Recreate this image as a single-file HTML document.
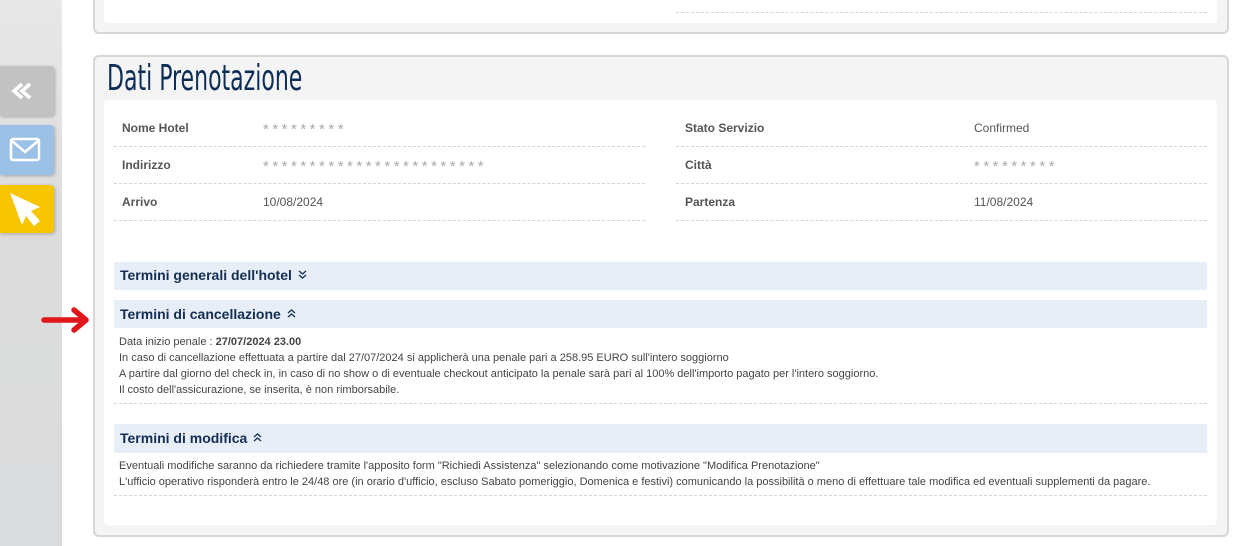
<!DOCTYPE html>
<html><head><meta charset="utf-8"><style>
*{margin:0;padding:0;box-sizing:border-box}
body{width:1252px;height:546px;overflow:hidden;background:#fff;font-family:"Liberation Sans",Arial,sans-serif;position:relative}
.a{position:absolute}
.side{left:0;top:0;width:62px;height:546px;background:linear-gradient(#e8e8e8,#dcdcdc 40%,#dadbdc)}
.btn{left:0;width:54px;border-radius:0 4px 4px 0;box-shadow:1px 1px 3px rgba(0,0,0,.25)}
.card{border:2px solid #d6d6d6;border-radius:6px;background:#f4f4f4}
.in{background:#fff;border-radius:4px}
.lb{font-size:12px;font-weight:bold;color:#555}
.vl{font-size:12px;color:#555}
.st{font-size:15px;color:#aaa;letter-spacing:3.5px;line-height:14px}
.dl{height:0;border-top:1px dashed #d4d4d4}
.hd{left:114px;width:1093px;background:#e7eef7;font-size:14px;font-weight:bold;color:#132e52;padding-left:6px;line-height:28px}
.hd svg{vertical-align:1px;margin-left:2px}
.tx{left:119px;font-size:11px;color:#444;line-height:16px}
</style></head><body>
<div class="a side"></div>
<div class="a btn" style="top:66px;height:50px;background:#c2c2c2"><svg width="54" height="50"><path d="M22 18 L14 25 L22 32 M30 18 L22 25 L30 32" stroke="#fff" stroke-width="3.5" fill="none"/></svg></div>
<div class="a btn" style="top:125px;height:50px;background:#9cc1e6"><svg width="54" height="50"><rect x="11" y="14" width="28" height="21" rx="2" stroke="#fff" stroke-width="2.5" fill="none"/><path d="M12 16 L25 27 L38 16" stroke="#fff" stroke-width="2.5" fill="none"/></svg></div>
<div class="a btn" style="top:185px;height:48px;background:#f7c600"><svg width="54" height="48"><path d="M10 8 L40 22 L31 26 L40 36 L34 41 L26 31 L22 40 Z" fill="#fff"/></svg></div>

<div class="a card" style="left:93px;top:-10px;width:1136px;height:44px"></div>
<div class="a in" style="left:104px;top:-5px;width:1113px;height:28px"></div>
<div class="a dl" style="left:676px;top:12px;width:531px"></div>

<div class="a card" style="left:93px;top:55px;width:1136px;height:482px"></div>
<div class="a" style="left:107px;top:58px;font-family:'Liberation Sans Narrow','DejaVu Sans Condensed',sans-serif;font-size:36px;color:#0d2d57;transform:scaleX(.68);transform-origin:left;white-space:nowrap">Dati Prenotazione</div>
<div class="a in" style="left:104px;top:100px;width:1113px;height:425px"></div>

<div class="a lb" style="left:122px;top:121px">Nome Hotel</div>
<div class="a st" style="left:263px;top:123px">*********</div>
<div class="a dl" style="left:114px;top:146px;width:531px"></div>
<div class="a lb" style="left:122px;top:158px">Indirizzo</div>
<div class="a st" style="left:263px;top:160px">************************</div>
<div class="a dl" style="left:114px;top:183px;width:531px"></div>
<div class="a lb" style="left:122px;top:195px">Arrivo</div>
<div class="a vl" style="left:263px;top:195px">10/08/2024</div>
<div class="a dl" style="left:114px;top:220px;width:531px"></div>

<div class="a lb" style="left:685px;top:121px">Stato Servizio</div>
<div class="a vl" style="left:974px;top:121px">Confirmed</div>
<div class="a dl" style="left:676px;top:146px;width:531px"></div>
<div class="a lb" style="left:685px;top:158px">Città</div>
<div class="a st" style="left:974px;top:160px">*********</div>
<div class="a dl" style="left:676px;top:183px;width:531px"></div>
<div class="a lb" style="left:685px;top:195px">Partenza</div>
<div class="a vl" style="left:974px;top:195px">11/08/2024</div>
<div class="a dl" style="left:676px;top:220px;width:531px"></div>

<div class="a hd" style="top:262px;height:28px;line-height:27px">Termini generali dell'hotel <svg width="9" height="9"><path d="M1 1 L4.5 4 L8 1 M1 5 L4.5 8 L8 5" stroke="#132e52" stroke-width="1.3" fill="none"/></svg></div>
<div class="a hd" style="top:300px;height:28px">Termini di cancellazione <svg width="9" height="9"><path d="M1 4 L4.5 1 L8 4 M1 8 L4.5 5 L8 8" stroke="#132e52" stroke-width="1.3" fill="none"/></svg></div>
<svg class="a" style="left:40px;top:305px" width="54" height="30"><path d="M4 15 H44 M34 5 L46 15 L34 25" stroke="#e0161b" stroke-width="5.5" stroke-linecap="round" stroke-linejoin="round" fill="none"/></svg>
<div class="a tx" style="top:334px">Data inizio penale : <b>27/07/2024 23.00</b><br>In caso di cancellazione effettuata a partire dal 27/07/2024 si applicherà una penale pari a 258.95 EURO sull'intero soggiorno<br>A partire dal giorno del check in, in caso di no show o di eventuale checkout anticipato la penale sarà pari al 100% dell'importo pagato per l'intero soggiorno.<br>Il costo dell'assicurazione, se inserita, è non rimborsabile.</div>
<div class="a dl" style="left:114px;top:403px;width:1093px"></div>

<div class="a hd" style="top:424px;height:29px">Termini di modifica <svg width="9" height="9"><path d="M1 4 L4.5 1 L8 4 M1 8 L4.5 5 L8 8" stroke="#132e52" stroke-width="1.3" fill="none"/></svg></div>
<div class="a tx" style="top:458px">Eventuali modifiche saranno da richiedere tramite l'apposito form "Richiedi Assistenza" selezionando come motivazione "Modifica Prenotazione"<br>L'ufficio operativo risponderà entro le 24/48 ore (in orario d'ufficio, escluso Sabato pomeriggio, Domenica e festivi) comunicando la possibilità o meno di effettuare tale modifica ed eventuali supplementi da pagare.</div>
<div class="a dl" style="left:114px;top:495px;width:1093px"></div>
</body></html>
